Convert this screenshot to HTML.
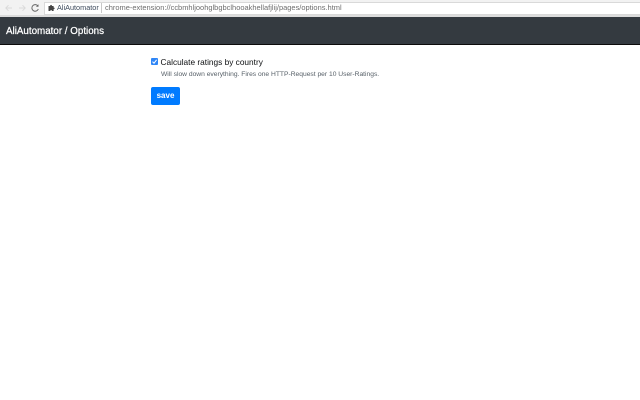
<!DOCTYPE html>
<html>
<head>
<meta charset="utf-8">
<style>
html,body{margin:0;padding:0;width:640px;height:400px;overflow:hidden;background:#fff;font-family:"Liberation Sans",sans-serif}
div,span,svg{position:absolute;white-space:nowrap}
#chrome{left:0;top:0;width:640px;height:17px;background:#f2f2f2}
#chromeline{left:0;top:15px;width:640px;height:2px;background:#dcdcdc}
#addr{left:44px;top:2px;width:600px;height:11px;background:#fff;border:1px solid #d9d9d9;border-right:0;box-sizing:content-box}
#nav{left:0;top:17px;width:640px;height:27px;background:#343a40}
#navb{left:0;top:44px;width:640px;height:1px;background:#0c0c0c}
#brand{left:6px;top:25px;font-size:9.8px;line-height:13px;color:#fff;-webkit-text-stroke:.25px #fff;filter:blur(.25px)}
#site{left:57px;top:1.500px;font-size:7.300px;line-height:11px;color:#3d4a5c;filter:blur(.25px)}
#sep{left:101px;top:3px;width:1px;height:10px;background:#c8c8c8}
#url{left:105px;top:1.500px;font-size:7.470px;line-height:11px;color:#6e6e6e;filter:blur(.25px)}
#cb{left:151px;top:58px;width:7px;height:7px;background:#2f86f6;border-radius:1px}
#lab{left:160.5px;top:55.5px;font-size:8.300px;line-height:12px;color:#0c0e10;filter:blur(.2px)}
#help{left:161px;top:68.500px;font-size:6.700px;line-height:11px;color:#565f67;filter:blur(.25px)}
#btn{left:151px;top:87px;width:29px;height:18px;background:#007bff;border-radius:2px;color:#fff;font-size:8px;line-height:18px;text-align:center;font-weight:bold}
</style>
</head>
<body>
<div id="chrome"></div>
<div id="chromeline"></div>
<svg style="left:3px;top:2px" width="40" height="12" viewBox="0 0 40 12" fill="none">
<path d="M9 6H3M5.500 3.200 2.800 6l2.700 2.800" stroke="#dadada" stroke-width="1"/>
<path d="M16 6h6M19.500 3.200 22.200 6l-2.700 2.800" stroke="#dadada" stroke-width="1"/>
<path d="M35 4.200A3.300 3.300 0 1 0 35.300 7" stroke="#666" stroke-width="1"/>
<path d="M35.500 2.200v2.600h-2.600z" fill="#666"/>
</svg>
<div id="addr"></div>
<svg style="left:48px;top:4px" width="7" height="8" viewBox="0 0 7 8">
<path d="M.5 2h1.700c-.3-1.500 2-1.500 1.700 0h1.700v1.500c1.300-.3 1.300 2 0 1.700V7H3.800c.3-1.300-1.700-1.300-1.400 0H.5z" fill="#444"/>
</svg>
<div id="site">AliAutomator</div>
<div id="sep"></div>
<div id="url">chrome-extension://ccbmhljoohglbgbclhooakhellafjlij/pages/options.html</div>
<div id="nav"></div>
<div id="navb"></div>
<div id="brand">AliAutomator / Options</div>
<div id="cb"></div>
<svg style="left:151px;top:58px" width="7" height="7" viewBox="0 0 7 7" fill="none">
<path d="M1.500 3.600 3 5.200 5.600 1.800" stroke="#fff" stroke-width="1"/>
</svg>
<div id="lab">Calculate ratings by country</div>
<div id="help">Will slow down everything. Fires one HTTP-Request per 10 User-Ratings.</div>
<div id="btn">save</div>
</body>
</html>
